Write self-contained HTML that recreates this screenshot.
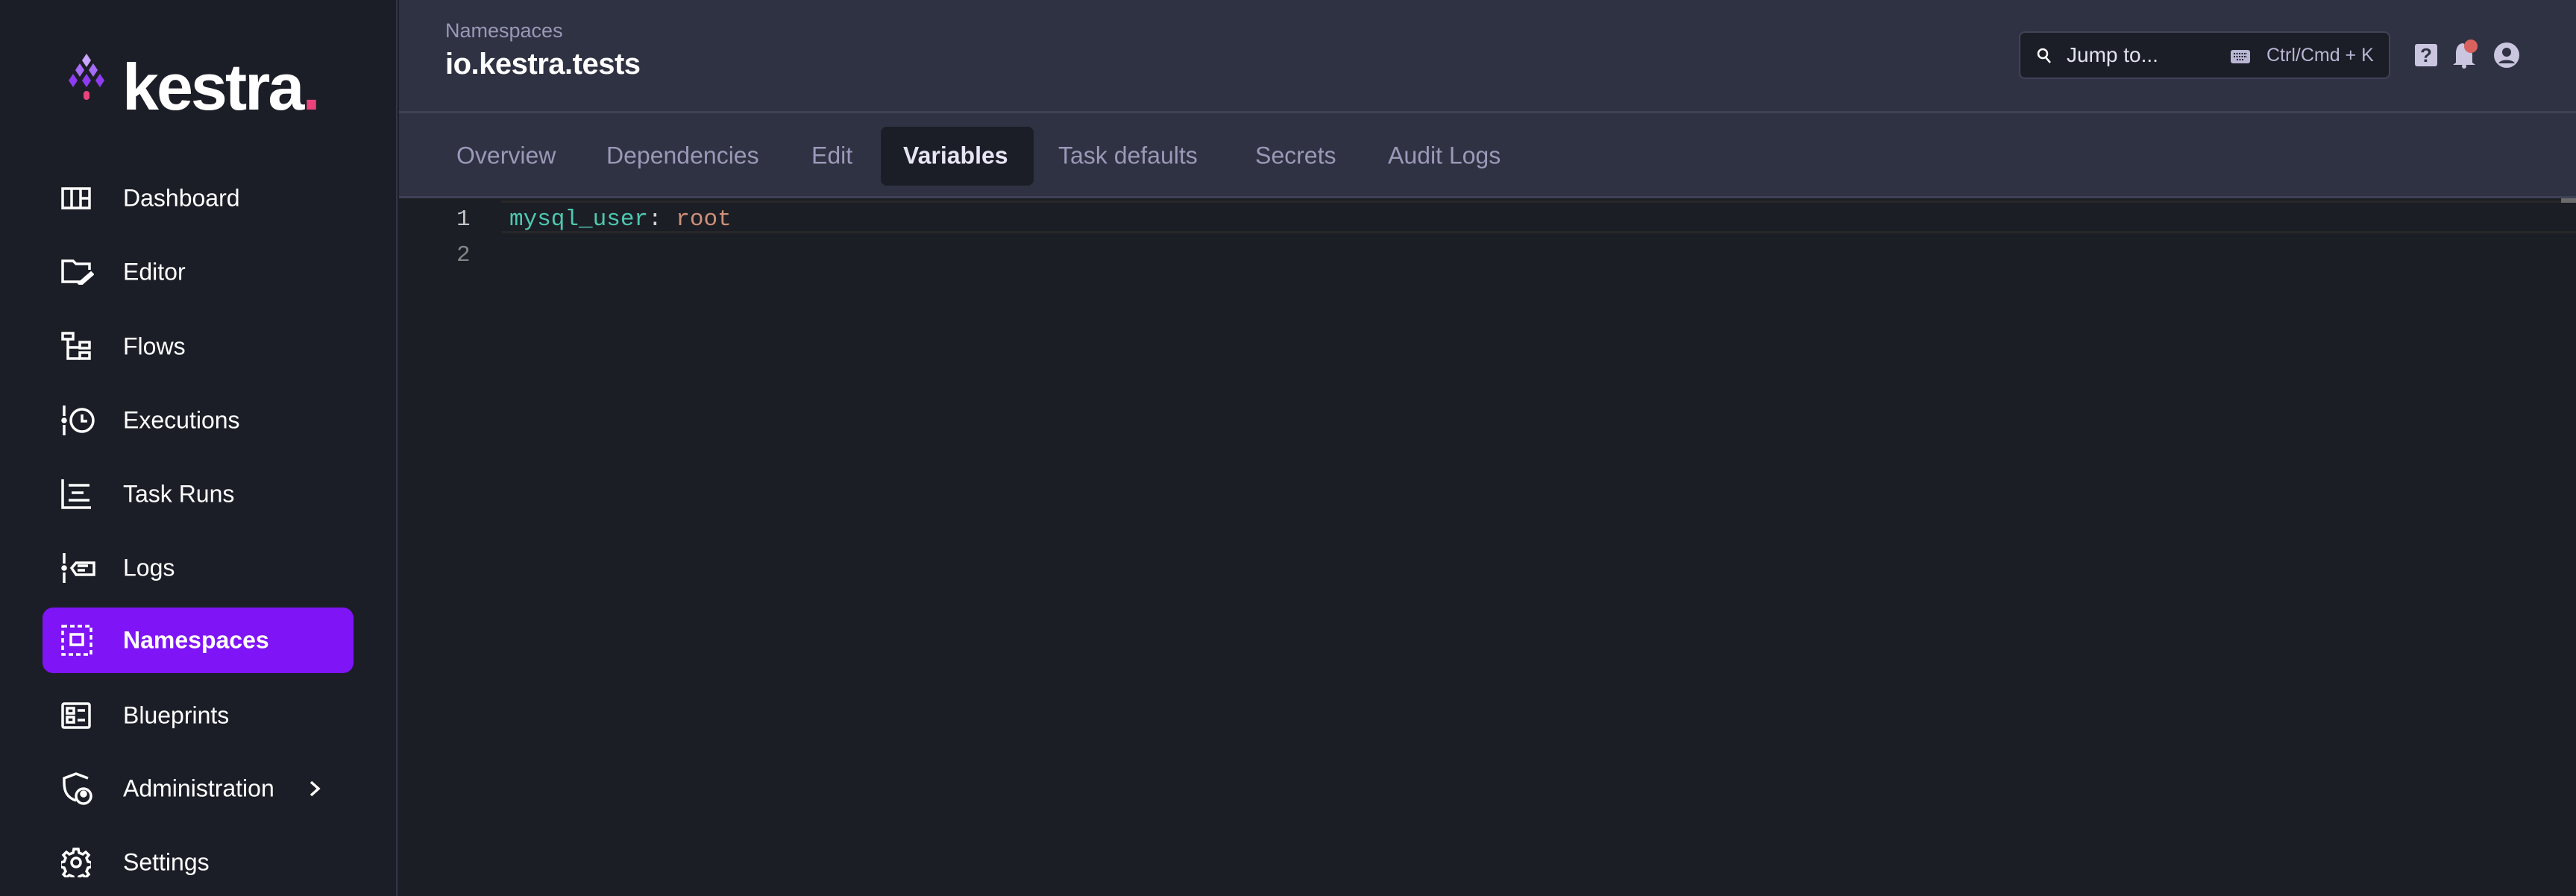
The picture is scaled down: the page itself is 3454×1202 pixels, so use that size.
<!DOCTYPE html>
<html><head><meta charset="utf-8"><style>
*{margin:0;padding:0;box-sizing:border-box}
body{width:3454px;height:1202px;overflow:hidden;background:#1c1e27;font-family:"Liberation Sans",sans-serif;position:relative}
.side{position:absolute;left:0;top:0;width:533px;height:1202px;background:#1c1e27;border-right:2px solid #33364a}
.logo{position:absolute;left:84px;top:72px}
.logo .t{position:absolute;left:80px;top:-6px;font-size:88px;font-weight:bold;color:#fff;letter-spacing:-3px}
.nav{position:absolute;left:0;width:533px;height:88px;color:#fff;font-size:32px}
.nav span{position:absolute;left:165px;top:50%;transform:translateY(-50%)}
.nav svg{position:absolute;left:82px;top:50%;transform:translateY(-50%)}
.nav.act{left:57px;width:417px;background:#7f14f6;border-radius:14px}
.nav.act span{left:108px;font-weight:bold}
.nav.act svg{left:25px}
.hdr{position:absolute;left:535px;top:0;right:0;height:152px;background:#2f3242;border-bottom:3px solid #3f4256}
.tabs{position:absolute;left:535px;top:152px;right:0;height:114px;background:#2f3242;border-bottom:3px solid #3f4256}
.tab{position:absolute;top:57px;transform:translateY(-50%);font-size:32px;color:#9b98b8}
.ed{position:absolute;left:535px;top:266px;right:0;bottom:0;background:#1c1e26;font-family:"Liberation Mono",monospace;font-size:31px}
</style></head><body>
<div class="side">
 <div class="logo">
  <svg width="64" height="80" viewBox="0 0 64 80">
   <g fill="#c9a6ff"><path d="M32 0l6 9-6 9-6-9z"/></g>
   <g fill="#a66cf7"><path d="M23 13l6 9-6 9-6-9z"/><path d="M41 13l6 9-6 9-6-9z"/></g>
   <g fill="#8d3cf2"><path d="M14 27l6 9-6 9-6-9z"/><path d="M32 27l6 9-6 9-6-9z"/><path d="M50 27l6 9-6 9-6-9z"/></g>
   <rect x="28" y="50" width="8" height="12" rx="4" fill="#e9437a"/>
  </svg>
  <div class="t">kestra<span style="color:#e9437a">.</span></div>
 </div>
 <div class="nav" style="top:222px"><svg width="40" height="30" viewBox="0 0 40 30" fill="none" stroke="#fff" stroke-width="3.5"><rect x="2" y="2" width="36" height="26"/><path d="M14 2v26M26 2v26M26 15h12"/></svg><span>Dashboard</span></div>
 <div class="nav" style="top:321px"><svg width="44" height="34" viewBox="0 0 44 34" fill="none" stroke="#fff" stroke-width="3.5"><path d="M30 30H2V2h14l4 4h18v8"/><path d="M24 32l16-14 2 2-16 14z"/></svg><span>Editor</span></div>
 <div class="nav" style="top:421px"><svg width="40" height="40" viewBox="0 0 40 40" fill="none" stroke="#fff" stroke-width="3.5"><rect x="2" y="2" width="14" height="8"/><path d="M9 10v26h16"/><rect x="25" y="14" width="13" height="8"/><rect x="25" y="28" width="13" height="8"/><path d="M9 21h16"/></svg><span>Flows</span></div>
 <div class="nav" style="top:520px"><svg width="46" height="40" viewBox="0 0 46 40" fill="none" stroke="#fff" stroke-width="3.5"><path d="M4 0v14M4 26v14"/><circle cx="4" cy="20" r="2" fill="#fff"/><circle cx="28" cy="20" r="15"/><path d="M28 12v9h7"/></svg><span>Executions</span></div>
 <div class="nav" style="top:619px"><svg width="40" height="40" viewBox="0 0 40 40" fill="none" stroke="#fff" stroke-width="3.5"><path d="M2 0v38h38"/><path d="M10 8h28M14 18h16M10 28h28"/></svg><span>Task Runs</span></div>
 <div class="nav" style="top:718px"><svg width="46" height="40" viewBox="0 0 46 40" fill="none" stroke="#fff" stroke-width="3.5"><path d="M4 0v14M4 26v14"/><circle cx="4" cy="20" r="2" fill="#fff"/><path d="M14 20l6-7h24v16H20z"/><path d="M22 17h14M22 23h10"/></svg><span>Logs</span></div>
 <div class="nav act" style="top:815px"><svg width="42" height="42" viewBox="0 0 42 42" fill="none" stroke="#fff" stroke-width="3.5" stroke-dasharray="6 4"><rect x="2" y="2" width="38" height="38"/><rect x="13" y="13" width="16" height="14" stroke-dasharray="none"/></svg><span>Namespaces</span></div>
 <div class="nav" style="top:916px"><svg width="40" height="36" viewBox="0 0 40 36" fill="none" stroke="#fff" stroke-width="3.5"><rect x="2" y="2" width="36" height="32" rx="2"/><rect x="8" y="8" width="9" height="7"/><rect x="8" y="20" width="9" height="7"/><path d="M22 11h10M22 24h10"/></svg><span>Blueprints</span></div>
 <div class="nav" style="top:1014px"><svg width="44" height="44" viewBox="0 0 44 44" fill="none" stroke="#fff" stroke-width="3.5"><path d="M20 38C8 34 4 26 4 14V8l16-6 16 6"/><circle cx="30" cy="32" r="10"/><circle cx="30" cy="29" r="3" fill="#fff"/></svg><span>Administration</span><svg style="left:412px" width="20" height="24" viewBox="0 0 20 24" fill="none" stroke="#fff" stroke-width="3.5"><path d="M5 3l10 9-10 9"/></svg></div>
 <div class="nav" style="top:1113px"><svg width="40" height="40" viewBox="0 0 40 40" fill="none" stroke="#fff" stroke-width="3.5"><path d="M17 2h6l1 5 5 2 4-3 4 4-3 4 2 5 5 1v6l-5 1-2 5 3 4-4 4-4-3-5 2-1 5h-6l-1-5-5-2-4 3-4-4 3-4-2-5-5-1v-6l5-1 2-5-3-4 4-4 4 3 5-2z"/><circle cx="20" cy="20" r="6"/></svg><span>Settings</span></div>
</div>
<div class="hdr">
 <div style="position:absolute;left:62px;top:26px;font-size:27px;color:#9b98b8">Namespaces</div>
 <div style="position:absolute;left:62px;top:64px;font-size:40px;font-weight:bold;color:#fff;letter-spacing:-0.5px">io.kestra.tests</div>
 <div style="position:absolute;left:2172px;top:42px;width:498px;height:64px;background:#1c1e27;border:2px solid #404358;border-radius:8px">
  <svg style="position:absolute;left:22px;top:20px" width="20" height="22" viewBox="0 0 20 22" fill="none" stroke="#fff" stroke-width="2.5"><circle cx="8" cy="8" r="6"/><path d="M12 13l6 7"/></svg>
  <div style="position:absolute;left:62px;top:14px;font-size:28px;color:#e4e2f0">Jump to...</div>
  <svg style="position:absolute;left:282px;top:23px" width="26" height="18" viewBox="0 0 26 18"><rect width="26" height="18" rx="3" fill="#b9b5d4"/><path d="M4 5h18M4 9h18M8 13h10" stroke="#1c1e27" stroke-width="2" stroke-dasharray="2 1.5"/></svg>
  <div style="position:absolute;left:330px;top:16px;font-size:25px;color:#b9b5d4">Ctrl/Cmd + K</div>
 </div>
 <div style="position:absolute;left:2703px;top:59px;width:30px;height:30px;background:#cac6e0;border-radius:3px;color:#2f3242;font-weight:bold;font-size:26px;text-align:center;line-height:30px">?</div>
 <svg style="position:absolute;left:2752px;top:52px" width="40" height="42" viewBox="0 0 40 42"><path d="M16 6c-8 0-10 8-10 14v12l-4 3h30l-4-3V20" fill="#cac6e0"/><circle cx="17" cy="37" r="3" fill="#cac6e0"/><circle cx="26" cy="10" r="9" fill="#d9625e"/></svg>
 <svg style="position:absolute;left:2808px;top:56px" width="36" height="36" viewBox="0 0 36 36"><circle cx="18" cy="18" r="17" fill="#cac6e0"/><circle cx="18" cy="14" r="6" fill="#2f3242"/><path d="M7 29c3-6 19-6 22 0" fill="#2f3242"/></svg>
</div>
<div class="tabs">
 <div class="tab" style="left:77px">Overview</div>
 <div class="tab" style="left:278px">Dependencies</div>
 <div class="tab" style="left:553px">Edit</div>
 <div style="position:absolute;left:646px;top:18px;width:205px;height:79px;background:#1c1e27;border-radius:8px"></div>
 <div class="tab" style="left:676px;color:#e6e4f5;font-weight:bold">Variables</div>
 <div class="tab" style="left:884px">Task defaults</div>
 <div class="tab" style="left:1148px">Secrets</div>
 <div class="tab" style="left:1326px">Audit Logs</div>
</div>
<div class="ed">
 <div style="position:absolute;left:137px;top:3px;right:0;height:44px;border-top:3px solid #282828;border-bottom:3px solid #282828"></div>
 <div style="position:absolute;left:77px;top:5px;line-height:48px;color:#c6c6c6">1<br><span style="color:#858585">2</span></div>
 <div style="position:absolute;left:148px;top:5px;line-height:48px;color:#d4d4d4"><span style="color:#4ec9b0">mysql_user</span>: <span style="color:#ce9178">root</span></div>
 <div style="position:absolute;right:0;top:0;width:20px;height:6px;background:#6b6b6b"></div>
</div>
</body></html>
